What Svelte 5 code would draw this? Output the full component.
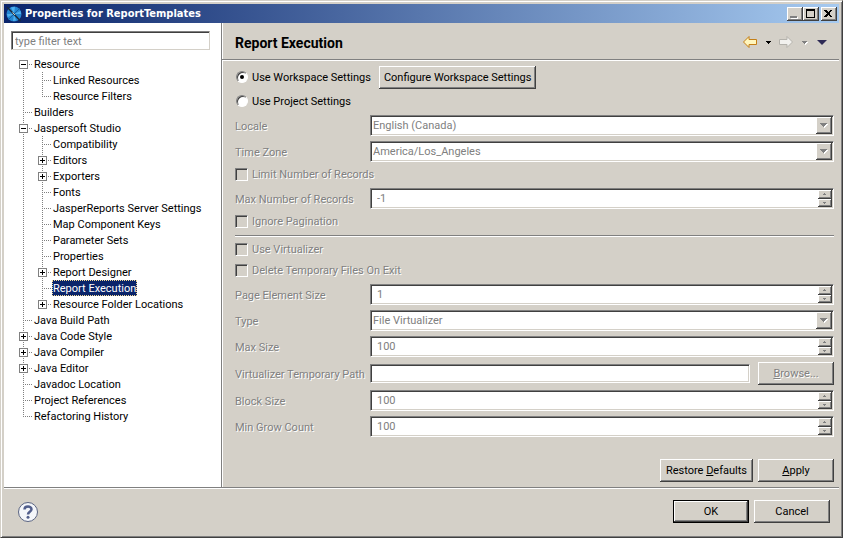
<script lang="ts">
	type Item = { text: string; depth: number; toggle?: '-' | '+'; first?: boolean; last?: boolean };

	const items: Item[] = [
		{ text: 'Resource', depth: 0, toggle: '-', first: true },
		{ text: 'Linked Resources', depth: 1 },
		{ text: 'Resource Filters', depth: 1, last: true },
		{ text: 'Builders', depth: 0 },
		{ text: 'Jaspersoft Studio', depth: 0, toggle: '-' },
		{ text: 'Compatibility', depth: 1 },
		{ text: 'Editors', depth: 1, toggle: '+' },
		{ text: 'Exporters', depth: 1, toggle: '+' },
		{ text: 'Fonts', depth: 1 },
		{ text: 'JasperReports Server Settings', depth: 1 },
		{ text: 'Map Component Keys', depth: 1 },
		{ text: 'Parameter Sets', depth: 1 },
		{ text: 'Properties', depth: 1 },
		{ text: 'Report Designer', depth: 1, toggle: '+' },
		{ text: 'Report Execution', depth: 1 },
		{ text: 'Resource Folder Locations', depth: 1, toggle: '+', last: true },
		{ text: 'Java Build Path', depth: 0 },
		{ text: 'Java Code Style', depth: 0, toggle: '+' },
		{ text: 'Java Compiler', depth: 0, toggle: '+' },
		{ text: 'Java Editor', depth: 0, toggle: '+' },
		{ text: 'Javadoc Location', depth: 0 },
		{ text: 'Project References', depth: 0 },
		{ text: 'Refactoring History', depth: 0, last: true }
	];

	let selected = $state('Report Execution');
	let mode = $state('workspace');
	let filter = $state('');
	let disabled = $derived(mode === 'workspace');
</script>

{#snippet combo(id: string, label: string, value: string)}
	<label class="caption" class:off={disabled} for={id}>{label}</label>
	<div class="field">
		<select {id} {disabled}>
			<option>{value}</option>
		</select>
		<span class="arrow">
			<svg width="8" height="5" viewBox="0 0 8 5" shape-rendering="crispEdges">
				<path d="M1 1h7l-4 4z" fill="#fff" />
				<path d="M0 0h7v1H6v1H5v1H4v1H3V3H2V2H1V1H0z" fill="#808080" />
			</svg>
		</span>
	</div>
{/snippet}

{#snippet spinner(id: string, label: string, value: string)}
	<label class="caption" class:off={disabled} for={id}>{label}</label>
	<div class="field">
		<input class="number" {id} type="text" {value} {disabled} />
		<div class="spin">
			<button type="button" aria-label="Increase {label}" {disabled}>
				<svg width="4" height="2" viewBox="0 0 4 2" shape-rendering="crispEdges">
					<path d="M1 0h1v1h1v1H0V1h1z" fill="#808080" />
				</svg>
			</button>
			<button type="button" aria-label="Decrease {label}" {disabled}>
				<svg width="4" height="2" viewBox="0 0 4 2" shape-rendering="crispEdges">
					<path d="M0 0h3v1H2v1H1V1H0z" fill="#808080" />
				</svg>
			</button>
		</div>
	</div>
{/snippet}

{#snippet check(label: string)}
	<label class="option wide" class:off={disabled}>
		<input type="checkbox" {disabled} />
		{label}
	</label>
{/snippet}

<div class="window">
	<header class="titlebar">
		<svg width="16" height="16" viewBox="0 0 16 16">
			<circle cx="8" cy="8" r="7.500" fill="#2386d2" />
			<path d="M8 8 5 1.500 9 .8zM8 8l6.500-3 .5 3zM8 8l-1 7 3-.5zM8 8 1 8l.8 3z" fill="#4fb0ee" />
			<path d="M13.500 2.500 2.500 13.500" stroke="#1a5f9f" />
			<path d="M1 1 14.500 15" stroke="#1b2a3c" stroke-width="1.500" />
			<path d="M6.500 6.500 9 9" stroke="#c9c6b8" />
		</svg>
		<h1>Properties for ReportTemplates</h1>
		<button type="button" aria-label="Minimize">
			<svg width="12" height="10" viewBox="0 0 12 10" shape-rendering="crispEdges">
				<path d="M2 8h7v2H2z" fill="#fff" />
				<path d="M1 7h7v2H1z" fill="#808080" />
			</svg>
		</button>
		<button type="button" aria-label="Maximize">
			<svg width="12" height="10" viewBox="0 0 12 10" shape-rendering="crispEdges">
				<path d="M1 0h9v9H1zM2 2v6h7V2z" fill="#000" fill-rule="evenodd" />
			</svg>
		</button>
		<button class="close" type="button" aria-label="Close">
			<svg width="12" height="10" viewBox="0 0 12 10" shape-rendering="crispEdges">
				<path
					d="M1 1h2v1h1v1h2V2h1V1h2v1H8v1H7v1H6v1h1v1h1v1h1v1H7V7H6V6H4v1H3v1H1V7h1V6h1V5h1V4H3V3H2V2H1z"
					fill="#000"
				/>
				<path d="M2 1h2v1h1v1h1V2h1V1h2v1H8v1H7v3h1v1h1v1H7V7H6V6H5v1H4v1H2V7h1V6h1V3H3V2H2z" />
			</svg>
		</button>
	</header>

	<div class="main">
		<nav class="side">
			<input
				class="filter"
				type="text"
				aria-label="Filter"
				placeholder="type filter text"
				bind:value={filter}
			/>
			<ul>
				{#each items as item}
					<li>
						{#if item.depth === 1}
							<svg width="19" height="16" viewBox="0 0 19 16" shape-rendering="crispEdges">
								<path class="dots" d="M9.500 0V16" />
							</svg>
						{/if}
						<svg width="19" height="16" viewBox="0 0 19 16" shape-rendering="crispEdges">
							<path
								class="dots"
								d="M9.500 {item.first ? 8 : 0}V{item.last ? 8 : 16}M9 8.500H18"
							/>
							{#if item.toggle}
								<rect x="5.500" y="4.500" width="8" height="8" fill="#fff" stroke="#808080" />
								<path
									d={item.toggle === '+' ? 'M7 8.500h5M9.500 6v5' : 'M7 8.500h5'}
									stroke="#000"
								/>
							{/if}
						</svg>
						<button
							type="button"
							class:selected={item.text === selected}
							onclick={() => (selected = item.text)}>{item.text}</button
						>
					</li>
				{/each}
			</ul>
		</nav>

		<section class="page">
			<div class="page-head">
				<h2>Report Execution</h2>
				<button type="button" aria-label="Back">
					<svg width="16" height="14" viewBox="0 0 16 14">
						<path
							d="M1.500 8 7 2.500V5.500h7.500v5H7v3z"
							fill="#fff6bd"
							stroke="#c47f16"
							stroke-linejoin="round"
						/>
					</svg>
				</button>
				<button type="button" aria-label="Back history">
					<svg width="20" height="14" viewBox="0 0 20 14" shape-rendering="crispEdges">
						<path d="M8 7h5v1h-1v1h-1v1h-1V9H9V8H8z" fill="#000" />
					</svg>
				</button>
				<button type="button" aria-label="Forward" disabled>
					<svg width="16" height="14" viewBox="0 0 16 14">
						<path
							d="M14.500 8 9 2.500V5.500H1.500v5H9v3z"
							fill="#f2f1ee"
							stroke="#b4b2ac"
							stroke-linejoin="round"
						/>
					</svg>
				</button>
				<button type="button" aria-label="Forward history" disabled>
					<svg width="20" height="14" viewBox="0 0 20 14" shape-rendering="crispEdges">
						<path d="M9 8h5v1h-1v1h-1v1h-1v-1h-1V9H9z" fill="#fff" />
						<path d="M8 7h5v1h-1v1h-1v1h-1V9H9V8H8z" fill="#808080" />
					</svg>
				</button>
				<button type="button" aria-label="View menu">
					<svg width="16" height="14" viewBox="0 0 16 14">
						<path d="M3 6h10l-5 5z" fill="#2e2a55" />
					</svg>
				</button>
			</div>

			<div class="form">
				<div class="line wide">
					<label class="option">
						<input type="radio" name="mode" value="workspace" bind:group={mode} />
						Use Workspace Settings
					</label>
					<button class="btn" type="button">Configure Workspace Settings</button>
				</div>
				<label class="option wide">
					<input type="radio" name="mode" value="project" bind:group={mode} />
					Use Project Settings
				</label>

				{@render combo('locale', 'Locale', 'English (Canada)')}
				{@render combo('zone', 'Time Zone', 'America/Los_Angeles')}
				{@render check('Limit Number of Records')}
				{@render spinner('records', 'Max Number of Records', '-1')}
				{@render check('Ignore Pagination')}
				<hr class="wide" />
				{@render check('Use Virtualizer')}
				{@render check('Delete Temporary Files On Exit')}
				{@render spinner('element', 'Page Element Size', '1')}
				{@render combo('type', 'Type', 'File Virtualizer')}
				{@render spinner('size', 'Max Size', '100')}

				<label class="caption" class:off={disabled} for="path">Virtualizer Temporary Path</label>
				<div class="line">
					<input class="path" id="path" type="text" {disabled} />
					<button class="btn std" type="button" {disabled}><u>B</u>rowse...</button>
				</div>

				{@render spinner('block', 'Block Size', '100')}
				{@render spinner('grow', 'Min Grow Count', '100')}
			</div>

			<div class="actions">
				<button class="btn" type="button">Restore <u>D</u>efaults</button>
				<button class="btn std" type="button"><u>A</u>pply</button>
			</div>
		</section>
	</div>

	<footer>
		<button class="help" type="button" aria-label="Help">
			<svg width="22" height="22" viewBox="0 0 22 22">
				<circle cx="11" cy="11" r="9.500" fill="#f4f6fa" stroke="#5a6482" />
				<path
					d="M7.500 8.500C7.500 4.500 14.500 4.500 14.500 8.300 14.500 10.800 11 10.800 11 13.500"
					fill="none"
					stroke="#525f8c"
					stroke-width="2.500"
				/>
				<circle cx="11" cy="16.200" r="1.500" fill="#525f8c" />
			</svg>
		</button>
		<button class="btn std default" type="button">OK</button>
		<button class="btn std" type="button">Cancel</button>
	</footer>
</div>

<style>
	:global(body) {
		margin: 0;
	}

	.window {
		display: flex;
		flex-direction: column;
		min-height: 100vh;
		box-sizing: border-box;
		padding: 2px;
		border: 1px solid;
		border-color: #d4d0c8 #404040 #404040 #d4d0c8;
		box-shadow:
			inset 1px 1px #fff,
			inset -1px -1px #808080;
		background: #d4d0c8;
		color: #000;
		font: 11px/16px Roboto, 'Liberation Sans', sans-serif;
	}

	button,
	input,
	select {
		margin: 0;
		padding: 0;
		box-sizing: border-box;
		border: none;
		border-radius: 0;
		background: none;
		color: inherit;
		font: inherit;
		outline: none;
	}

	svg {
		display: block;
		flex: none;
	}

	h1,
	h2 {
		flex: 1;
		margin: 0;
		font-weight: bold;
	}

	/* title bar */
	.titlebar {
		display: flex;
		align-items: center;
		height: 19px;
		margin: 1px 1px 0;
		padding: 0 2px;
		background: linear-gradient(to right, #0a246a, #a6caf0);
		color: #fff;
	}

	h1 {
		padding-left: 3px;
		font-family: 'DejaVu Sans Condensed', 'DejaVu Sans', sans-serif;
		font-size: 11px;
	}

	.titlebar button {
		width: 16px;
		height: 14px;
		padding: 1px 2px;
		background: #d4d0c8;
		box-shadow:
			inset -1px -1px #404040,
			inset 1px 1px #fff,
			inset -2px -2px #808080;
	}

	.titlebar .close {
		margin-left: 2px;
	}

	.main {
		display: flex;
		flex: 1;
		margin: 0 1px;
		border-bottom: 1px solid #808080;
	}

	/* navigation tree */
	.side {
		width: 217px;
		flex: none;
		box-sizing: border-box;
		padding: 8px 10px 0 7px;
		border-right: 1px solid #fff;
		background: #fff;
	}

	.filter {
		width: 100%;
		height: 19px;
		padding: 1px 3px 0;
		border: 1px solid;
		border-color: #808080 #d4d0c8 #d4d0c8 #808080;
		box-shadow: inset 1px 1px #404040;
	}

	.filter::placeholder {
		color: #808080;
		opacity: 1;
	}

	ul {
		margin: 6px 0 0;
		padding: 0 0 0 3px;
		list-style: none;
	}

	li {
		display: flex;
		height: 16px;
	}

	li button {
		padding: 2px 1px 0;
		line-height: 14px;
		white-space: nowrap;
	}

	li .selected {
		background: #0a246a;
		color: #fff;
		outline: 1px dotted #f5db95;
		outline-offset: -1px;
	}

	.dots {
		stroke: #808080;
		stroke-dasharray: 1 1;
	}

	/* preference page */
	.page {
		display: flex;
		flex: 1;
		flex-direction: column;
		border-left: 1px solid #808080;
		box-shadow: inset 1px 0 #fff;
	}

	.page-head {
		display: flex;
		align-items: center;
		height: 36px;
		padding: 0 9px 0 13px;
		border-bottom: 1px solid #808080;
		box-shadow: 0 1px #fff;
	}

	h2 {
		padding-top: 4px;
		font-size: 14px;
	}

	.form {
		display: grid;
		grid-template-columns: 130px 1fr;
		gap: 5px;
		padding: 6px 5px 0 13px;
	}

	.wide {
		grid-column: 1 / -1;
	}

	.line {
		display: flex;
		align-items: center;
		gap: 8px;
	}

	.option {
		display: flex;
		align-items: center;
		gap: 4px;
	}

	.caption {
		align-self: center;
		padding-top: 2px;
		white-space: nowrap;
	}

	.off {
		color: #808080;
		text-shadow: 1px 1px #fff;
	}

	input[type='radio'] {
		display: grid;
		place-items: center;
		width: 12px;
		height: 12px;
		margin: 0 0 2px 1px;
		appearance: none;
		border: 1px solid;
		border-color: #808080 #fff #fff #808080;
		border-radius: 50%;
		background: #fff;
		box-shadow: inset 1px 1px #404040;
	}

	input[type='radio']:checked::before {
		content: '';
		width: 4px;
		height: 4px;
		border-radius: 50%;
		background: #000;
	}

	input[type='checkbox'] {
		width: 13px;
		height: 13px;
		margin: 0 0 1px;
		appearance: none;
		border: 1px solid;
		border-color: #808080 #fff #fff #808080;
		background: #d4d0c8;
		box-shadow: inset 1px 1px #404040;
	}

	input[type='checkbox']:checked {
		background: #404040;
	}

	.field {
		display: flex;
		height: 21px;
		box-sizing: border-box;
		padding: 1px;
		border: 1px solid;
		border-color: #808080 #fff #fff #808080;
		background: #fff;
		box-shadow:
			inset 1px 1px #404040,
			inset -1px -1px #d4d0c8;
	}

	.field select,
	.number {
		flex: 1;
		min-width: 0;
		appearance: none;
	}

	.field select {
		padding: 1px 0 0 1px;
	}

	.number {
		padding: 1px 5px 0;
	}

	select:disabled,
	input:disabled {
		color: #808080;
		opacity: 1;
	}

	.arrow {
		display: grid;
		place-items: center;
		width: 16px;
	}

	.arrow,
	.spin button {
		background: #d4d0c8;
		box-shadow:
			inset -1px -1px #404040,
			inset 1px 1px #fff,
			inset -2px -2px #808080;
	}

	.spin {
		display: grid;
		grid-template-rows: 1fr 1fr;
		width: 14px;
	}

	.spin button {
		display: grid;
		place-items: center;
	}

	.path {
		flex: 1;
		min-width: 0;
		height: 19px;
		padding: 0 3px;
		border: 1px solid;
		border-color: #808080 #fff #fff #808080;
		background: #fff;
		box-shadow:
			inset 1px 1px #404040,
			inset -1px -1px #d4d0c8;
	}

	hr {
		width: 100%;
		height: 2px;
		margin: 0;
		box-sizing: border-box;
		border: solid;
		border-width: 1px 0;
		border-color: #808080 transparent #fff;
	}

	.btn {
		height: 23px;
		padding: 0 5px;
		background: #d4d0c8;
		box-shadow:
			inset -1px -1px #404040,
			inset 1px 1px #fff,
			inset -2px -2px #808080;
		white-space: nowrap;
	}

	.btn:disabled {
		color: #808080;
		text-shadow: 1px 1px #fff;
	}

	.std {
		width: 76px;
	}

	.default {
		border: 1px solid #000;
	}

	.actions {
		display: flex;
		justify-content: flex-end;
		gap: 5px;
		margin-top: auto;
		padding: 5px;
	}

	.actions .btn {
		padding: 0 6px;
	}

	footer {
		display: flex;
		align-items: center;
		gap: 5px;
		padding: 11px 9px 12px;
		margin: 0 1px;
		border-top: 1px solid #fff;
	}

	.help {
		margin: 0 auto 0 4px;
	}
</style>
